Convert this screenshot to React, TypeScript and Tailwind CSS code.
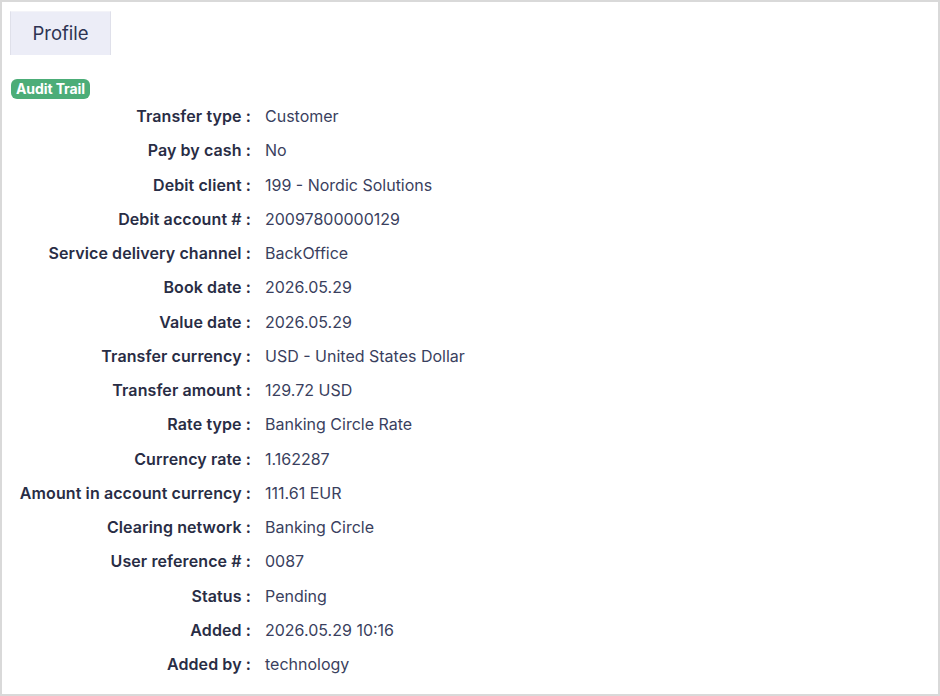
import React from 'react';

const rows: [string, string][] = [
  ['Transfer type', 'Customer'],
  ['Pay by cash', 'No'],
  ['Debit client', '199 - Nordic Solutions'],
  ['Debit account #', '20097800000129'],
  ['Service delivery channel', 'BackOffice'],
  ['Book date', '2026.05.29'],
  ['Value date', '2026.05.29'],
  ['Transfer currency', 'USD - United States Dollar'],
  ['Transfer amount', '129.72 USD'],
  ['Rate type', 'Banking Circle Rate'],
  ['Currency rate', '1.162287'],
  ['Amount in account currency', '111.61 EUR'],
  ['Clearing network', 'Banking Circle'],
  ['User reference #', '0087'],
  ['Status', 'Pending'],
  ['Added', '2026.05.29 10:16'],
  ['Added by', 'technology'],
];

export default function App() {
  return (
    <div className="h-[696px] w-[940px] border-2 border-[#d9d9d9] bg-white font-['Inter',sans-serif] overflow-hidden">
      <div className="pl-2 pt-[9px]">
        <div className="w-[101px] h-[44px] bg-[#ecedf7] border-x border-[#dfe0ea] border-t border-t-[#f3f3f8] flex items-center justify-center text-[18.5px] text-[#2d3352]">
          Profile
        </div>
      </div>

      <div className="pl-[9px] mt-[21px]">
        <span className="inline-flex items-center h-[20px] px-[5px] rounded-[6px] bg-[#4cad78] text-white text-[14px] font-bold tracking-[-0.1px]">
          Audit Trail
        </span>
      </div>

      <div className="-mt-px grid grid-cols-[249px_1fr] auto-rows-[34.25px] text-[16px]">
        {rows.map(([label, value]) => (
          <React.Fragment key={label}>
            <div className="flex items-center justify-end font-semibold text-[#292d45] tracking-[0.1px] whitespace-nowrap">
              {label} :
            </div>
            <div className="flex items-center pl-[14px] text-[#3a3f5e] whitespace-nowrap">{value}</div>
          </React.Fragment>
        ))}
      </div>
    </div>
  );
}
